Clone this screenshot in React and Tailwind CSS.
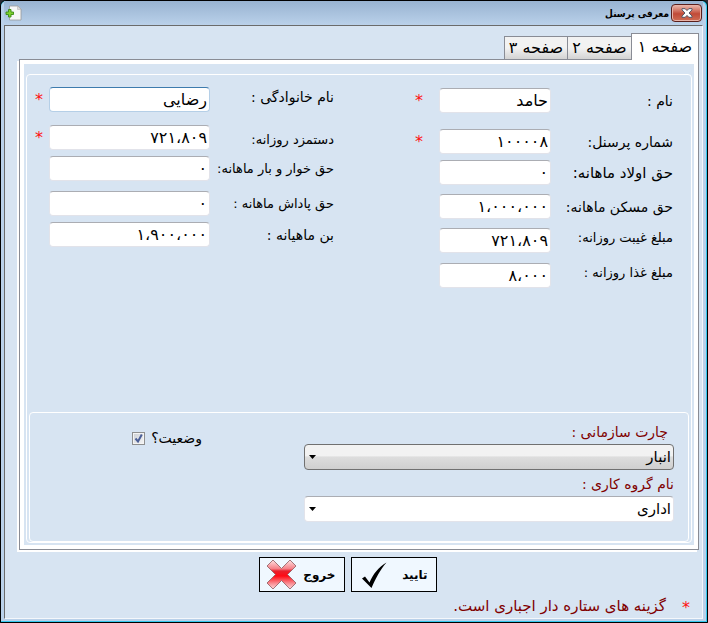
import React from 'react';
import { clsx } from 'clsx';

const mainFields = [
  { id: 'name', label: 'نام :', value: 'حامد', required: true, size: 'text-sm', row: 'mb-4' },
  { id: 'code', label: 'شماره پرسنل:', value: '۱۰۰۰۰۸', required: true, size: 'text-sm', row: 'mb-1.5' },
  { id: 'child', label: 'حق اولاد ماهانه:', value: '۰', size: 'text-[15px]', row: 'mb-[9px]' },
  { id: 'housing', label: 'حق مسکن ماهانه:', value: '۱،۰۰۰،۰۰۰', size: 'text-sm', row: 'mb-[9px]' },
  { id: 'absence', label: 'مبلغ غیبت روزانه:', value: '۷۲۱،۸۰۹', size: 'text-[13px]', row: 'mb-2.5', align: 'self-start' },
  { id: 'food', label: 'مبلغ غذا روزانه :', value: '۸،۰۰۰', size: 'text-[13px]', align: 'self-start' },
];

const extraFields = [
  { id: 'family', label: 'نام خانوادگی :', value: 'رضایی', required: true, size: 'text-sm', row: 'mb-[13px]', align: 'self-start', focused: true },
  { id: 'wage', label: 'دستمزد روزانه:', value: '۷۲۱،۸۰۹', required: true, size: 'text-[13px]', row: 'mb-1.5', align: 'self-end' },
  { id: 'grocery', label: 'حق خوار و بار ماهانه:', value: '۰', size: 'text-[13px]', row: 'mb-2.5' },
  { id: 'bonus', label: 'حق پاداش ماهانه :', value: '۰', size: 'text-[13px]', row: 'mb-1.5' },
  { id: 'coupon', label: 'بن ماهیانه :', value: '۱،۹۰۰،۰۰۰', size: 'text-sm' },
];

function Star({ className }) {
  return <span className={clsx('text-base leading-5 text-[#ff1010]', className)}>*</span>;
}

function Field({ field, labelWidth, starBox }) {
  return (
    <div className={clsx('flex items-center', field.row)}>
      <label
        htmlFor={field.id}
        className={clsx('shrink-0 whitespace-nowrap leading-5', labelWidth, field.size, field.align)}
      >
        {field.label}
      </label>
      <input
        id={field.id}
        type="text"
        defaultValue={field.value}
        className={clsx(
          'h-[25px] min-w-0 flex-1 rounded-sm border bg-white px-0.5 text-base outline-none',
          field.focused
            ? 'border-[#b5cfe7] border-t-[#3d7bad]'
            : 'border-[#e2e3ea] border-t-[#abadb3]'
        )}
      />
      <span className={clsx('flex shrink-0', starBox)}>{field.required && <Star />}</span>
    </div>
  );
}

function Combo({ id, label, value, labelClass, className }) {
  return (
    <div className="flex flex-col">
      <label htmlFor={id} className={clsx('text-sm leading-6 text-[#800000]', labelClass)}>
        {label}
      </label>
      <div className="relative">
        <select
          id={id}
          className={clsx('h-[26px] w-full appearance-none rounded-sm border px-0.5 text-[15px] leading-5 outline-none', className)}
        >
          <option>{value}</option>
        </select>
        <svg className="pointer-events-none absolute left-[5px] top-[11px]" width="7" height="4" viewBox="0 0 7 4">
          <path d="M0 0h7L3.5 4z" fill="#000" />
        </svg>
      </div>
    </div>
  );
}

function TitleBar() {
  return (
    <header className="flex h-6 items-center bg-linear-to-b from-[#98b3d1] to-[#bad1ea] px-px">
      <button
        type="button"
        aria-label="بستن"
        className="flex h-[18px] w-[31px] items-center justify-center rounded-sm border border-[#5a1f1c] bg-linear-to-b from-[#e5a79a] from-10% via-[#c04a38] via-55% to-[#cf6d55] shadow-[inset_0_0_0_1px_#e8b3a8]"
      >
        <svg width="12" height="10" viewBox="0 0 12 10">
          <path
            d="M1 .7h3.2L6 2.6 7.8.7H11v1.2L8 5l3 3.1v1.2H7.8L6 7.4 4.2 9.3H1V8.1L4 5 1 1.9z"
            fill="#fff"
            stroke="#535666"
            strokeWidth="1"
          />
        </svg>
      </button>
      <h1 className="ms-0.5 flex-1 whitespace-nowrap font-['DejaVu_Sans_Condensed','DejaVu_Sans',sans-serif] text-[10px] font-bold">
        معرفی پرسنل
      </h1>
      <svg width="17" height="16" viewBox="0 0 17 16">
        <path d="M4.500 1h8.500l3 3v11H4.500z" fill="#f7f7f7" stroke="#9a9a9a" strokeWidth=".8" />
        <path d="M12.500 1v3.500H16z" fill="#dcdcdc" stroke="#b5b5b5" strokeWidth=".6" />
        <path d="M3.500 4.500h2.500v2.500h2.500v2.500H6V12H3.500V9.500H1V7h2.500z" fill="#7fd02f" stroke="#3b8a14" strokeWidth=".9" />
      </svg>
    </header>
  );
}

function Tabs() {
  const tab = 'border border-[#898c95] whitespace-nowrap text-base leading-5';
  return (
    <div role="tablist" className="flex items-end">
      <button role="tab" type="button" aria-selected="true" className={clsx(tab, 'relative z-10 -mb-px h-[27px] w-[68px] border-b-0 bg-white')}>
        صفحه ۱
      </button>
      <button role="tab" type="button" aria-selected="false" className={clsx(tab, 'h-[23px] w-16 border-b-0 border-r-0 bg-linear-to-b from-[#f2f2f2] from-50% to-[#d3d3d3]')}>
        صفحه ۲
      </button>
      <button role="tab" type="button" aria-selected="false" className={clsx(tab, 'h-[23px] w-[63px] border-b-0 border-r-0 bg-linear-to-b from-[#f2f2f2] from-50% to-[#d3d3d3]')}>
        صفحه ۳
      </button>
    </div>
  );
}

export default function App() {
  return (
    <div className="bg-[#2a2a33]">
      <div
        dir="rtl"
        className="flex min-h-screen flex-col rounded-t-md border border-black bg-[#35c8ee] pr-px pb-px font-['DejaVu_Sans',sans-serif] text-black"
      >
        <div className="flex flex-1 flex-col rounded-t-md bg-[#bad1ea] px-[3px] pb-0.5">
          <TitleBar />
          <main className="flex flex-1 flex-col border border-[#f4f7fb] border-l-[#6b6b6b] border-t-[#6b6b6b] bg-[#d7e4f2] pt-[7px]">
            <div className="ms-[3px] me-3.5">
              <Tabs />
              <div className="border border-[#898c95] bg-white p-1 shadow-[-2px_2px_0_#fff]">
                <div className="bg-[#d7e4f2] px-0.5 pt-2.5 pb-0.5">
                  <section className="rounded-sm border border-white px-0.5">
                    <div className="grid h-[337px] grid-cols-[minmax(0,339fr)_minmax(0,305fr)] items-start ps-4 pt-3">
                      <div className="pt-px">
                        {mainFields.map((f) => (
                          <Field key={f.id} field={f} labelWidth="w-[122px]" starBox="w-[105px] ps-4" />
                        ))}
                      </div>
                      <div>
                        {extraFields.map((f) => (
                          <Field key={f.id} field={f} labelWidth="w-[124px]" starBox="w-5 justify-center" />
                        ))}
                      </div>
                    </div>
                    <section className="flex h-[130px] items-start rounded-sm border border-white ps-3.5 pt-[7px]">
                      <div className="flex w-[370px] flex-col gap-0.5">
                        <Combo
                          id="chart"
                          label="چارت سازمانی :"
                          value="انبار"
                          labelClass="ps-1.5"
                          className="border-[#707070] bg-linear-to-b from-[#f2f2f2] from-45% via-[#dddddd] via-50% to-[#cfcfcf]"
                        />
                        <Combo
                          id="group"
                          label="نام گروه کاری :"
                          value="اداری"
                          className="border-[#e2e3ea] border-t-[#abadb3] bg-white"
                        />
                      </div>
                      <label htmlFor="status" className="ms-[102px] mt-2 flex items-center gap-1.5 whitespace-nowrap text-sm">
                        وضعیت؟
                        <span className="relative flex">
                          <input
                            id="status"
                            type="checkbox"
                            defaultChecked
                            className="peer size-[13px] appearance-none border border-[#8e8f8f] bg-linear-to-br from-[#cbcfd5] to-[#f6f6f6] shadow-[inset_0_0_0_1px_#f4f4f4]"
                          />
                          <svg className="pointer-events-none absolute inset-0 hidden peer-checked:block" width="13" height="13" viewBox="0 0 13 13">
                            <path d="M3.500 6.500 6 9.500 9.800 2.500" fill="none" stroke="#4b5f97" strokeWidth="2" />
                          </svg>
                        </span>
                      </label>
                    </section>
                  </section>
                </div>
              </div>
            </div>

            <div className="ms-3 mt-[7px] flex justify-center gap-1.5">
              <button type="button" className="flex h-[35px] w-[86px] items-center justify-between border border-black bg-[#f0f8ff] px-2 text-xs font-bold">
                تایید
                <svg width="28" height="28" viewBox="0 0 28 28">
                  <path d="M2 17.500 5 15.500l4.500 6C13 13 19 6 26.500 1.500 20 9 16 17 11.500 27z" fill="#000" />
                </svg>
              </button>
              <button type="button" className="flex h-[35px] w-[86px] items-center justify-between border border-black bg-[#f0f8ff] ps-2 pe-1.5 text-xs font-bold">
                خروج
                <svg width="31" height="31" viewBox="0 0 31 31">
                  <defs>
                    <linearGradient id="cross" x1="0" y1="0" x2="0" y2="1">
                      <stop offset="0" stopColor="#ffe3e3" />
                      <stop offset=".3" stopColor="#f58088" />
                      <stop offset=".38" stopColor="#e8202c" />
                      <stop offset=".55" stopColor="#ff0a14" />
                      <stop offset=".8" stopColor="#f98a90" />
                      <stop offset="1" stopColor="#ffd9dc" />
                    </linearGradient>
                  </defs>
                  <path
                    d="M7 1 15.500 9.500 24 1 30 7 21.500 15.500 30 24 24 30 15.500 21.500 7 30 1 24 9.500 15.500 1 7z"
                    fill="url(#cross)"
                    stroke="#8d5a5e"
                    strokeWidth=".8"
                    strokeLinejoin="round"
                  />
                </svg>
              </button>
            </div>

            <p className="mt-0.5 flex items-center gap-4 ps-3 text-[15px] leading-5 text-[#800000]">
              <Star className="pt-1" />
              گزینه های ستاره دار اجباری است.
            </p>
          </main>
        </div>
      </div>
    </div>
  );
}
